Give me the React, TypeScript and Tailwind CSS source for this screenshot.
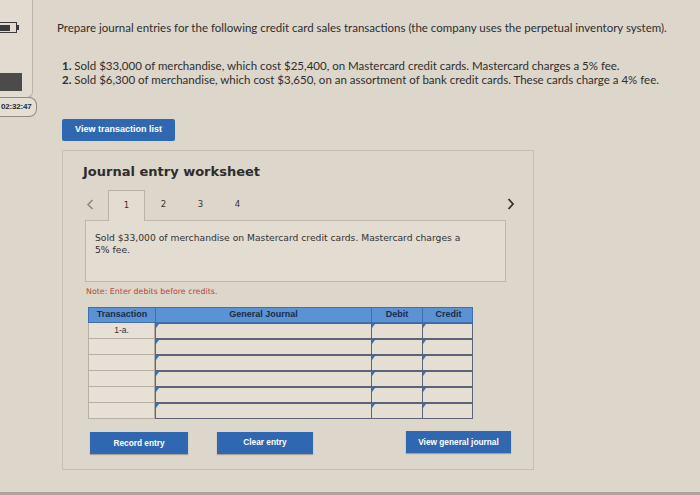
import React from "react";

const Marker = () => (
  <span className="absolute left-0 top-0 h-0 w-0 border-t-[4px] border-r-[3px] border-t-[#3f6fb5] border-r-transparent" />
);

function InputCell({ last }: { last?: boolean }) {
  return (
    <div
      className={`relative h-[16px] border-[1.5px] border-[#5b6378] bg-[#e4ded3] ${last ? "" : "-mr-[1.5px]"}`}
    >
      <Marker />
    </div>
  );
}

export default function App() {
  const rows = [0, 1, 2, 3, 4, 5];
  return (
    <div className="relative flex h-[495px] w-[700px] flex-col overflow-hidden bg-[#ddd6ca] text-[#2b2b2b]">
      <div className="flex flex-1">
        {/* left timer rail */}
        <div className="flex w-[37px] shrink-0 flex-col">
          <div className="flex h-[98px] w-[33px] flex-col rounded-br-[6px] border-r border-b border-[#b9b3a8] bg-[#e1dbd0]">
            <div className="mt-[22px] flex items-center">
              <div className="flex h-[11px] w-[17px] items-center border-[1.5px] border-l-0 border-[#3a3a3a] pr-[1px]">
                <div className="h-[6px] w-[10px] bg-[#3a3a3a]" />
              </div>
              <div className="h-[5px] w-[2px] bg-[#3a3a3a]" />
            </div>
            <div className="mt-[40px] h-[18px] w-[22px] bg-[#4b4b49]" />
          </div>
          <div className="-mt-[1px] flex h-[20px] w-[37px] items-center rounded-r-[8px] border border-l-0 border-[#8f8a82] bg-[#e4dfd5] pl-[1px] font-['Liberation_Sans',sans-serif] text-[8px] font-bold tracking-[-0.2px] text-[#2a2a2a]">
            02:32:47
          </div>
        </div>

        {/* main */}
        <div className="flex flex-col pl-[20px]">
          <div className="mt-[20px] h-[16px] whitespace-nowrap font-['Lato',sans-serif] text-[11.5px] leading-[16px] text-[#2e2e2e]">
            Prepare journal entries for the following credit card sales transactions (the company uses the perpetual inventory system).
          </div>
          <div className="mt-[23px] ml-[5px] flex flex-col whitespace-nowrap font-['Lato',sans-serif] text-[11.5px] leading-[14px] text-[#2e2e2e]">
            <div>
              <span className="font-bold">1.</span> Sold $33,000 of merchandise, which cost $25,400, on Mastercard credit cards. Mastercard charges a 5% fee.
            </div>
            <div>
              <span className="font-bold">2.</span> Sold $6,300 of merchandise, which cost $3,650, on an assortment of bank credit cards. These cards charge a 4% fee.
            </div>
          </div>

          <div className="mt-[32px] ml-[5px] flex h-[22px] w-[113px] items-center justify-center rounded-[2px] bg-[#2f67b0] font-['Liberation_Sans',sans-serif] text-[9px] font-bold text-white">
            View transaction list
          </div>

          {/* worksheet panel */}
          <div className="mt-[9px] ml-[5px] flex h-[320px] w-[472px] flex-col border border-[#c5bfb4] bg-[#ddd7cb] font-['DejaVu_Sans',sans-serif]">
            <div className="mt-[12px] ml-[20px] h-[18px] text-[13px] font-bold leading-[18px] text-[#2d2d2d]">
              Journal entry worksheet
            </div>

            {/* tabs */}
            <div className="mt-[9px] ml-[22px] flex h-[30px] w-[426px] items-stretch">
              <div className="flex w-[23px] items-center pl-[1px] pb-[2px]">
                <svg width="8" height="11" viewBox="0 0 8 11">
                  <path d="M6.5 1 L2 5.5 L6.5 10" fill="none" stroke="#8a8a8a" strokeWidth="1.6" />
                </svg>
              </div>
              <div className="relative z-10 -mb-px flex w-[37px] items-center justify-center border border-b-0 border-[#b9b2a6] bg-[#e2dcd1] pb-[2px] text-[8.5px] text-[#333]">
                1
              </div>
              <div className="flex w-[37px] items-center justify-center pb-[2px] text-[8.5px] text-[#333]">2</div>
              <div className="flex w-[37px] items-center justify-center pb-[2px] text-[8.5px] text-[#333]">3</div>
              <div className="flex w-[37px] items-center justify-center pb-[2px] text-[8.5px] text-[#333]">4</div>
              <div className="flex flex-1 items-end justify-end pb-[10px] pr-0">
                <svg width="8" height="12" viewBox="0 0 8 12" className="-mr-[4px]">
                  <path d="M1.5 1 L6 6 L1.5 11" fill="none" stroke="#333" strokeWidth="1.8" />
                </svg>
              </div>
            </div>
            <div className="ml-[22px] h-[62px] w-[421px] whitespace-nowrap border border-[#bdb6aa] bg-[#e2dcd1] px-[9px] pt-[11px] text-[9.2px] leading-[12px] text-[#333]">
              Sold $33,000 of merchandise on Mastercard credit cards. Mastercard charges a
              <br />
              5% fee.
            </div>

            <div className="mt-[5px] ml-[23px] h-[10px] whitespace-nowrap text-[7.9px] leading-[10px] text-[#b4493d]">
              Note: Enter debits before credits.
            </div>

            {/* table */}
            <div className="mt-[10px] ml-[25px] w-[385px]">
              <div className="grid h-[16px] grid-cols-[67px_216px_51px_51px] border border-[#3f70ad] bg-[#5a92d3] font-['Liberation_Sans',sans-serif] text-[9px] font-bold text-[#1d2b45]">
                <div className="flex items-center justify-center border-r border-[#3f70ad]">Transaction</div>
                <div className="flex items-center justify-center border-r border-[#3f70ad]">General Journal</div>
                <div className="flex items-center justify-center border-r border-[#3f70ad]">Debit</div>
                <div className="flex items-center justify-center">Credit</div>
              </div>
              {rows.map((r) => (
                <div key={r} className="grid grid-cols-[67px_216px_51px_51px]">
                  <div className="flex h-[16px] items-center justify-center border border-t-0 border-[#b5afa4] bg-[#e6e0d6] font-['Liberation_Sans',sans-serif] text-[8.5px] text-[#333]">
                    {r === 0 ? "1-a." : ""}
                  </div>
                  <InputCell />
                  <InputCell />
                  <InputCell last />
                </div>
              ))}
            </div>

            {/* buttons */}
            <div className="mt-[13px] ml-[27px] flex h-[22px] w-[421px] items-center font-['Liberation_Sans',sans-serif] text-[8.3px] font-bold text-white">
              <div className="flex h-[22px] w-[98px] items-center justify-center bg-[#2f67b1] shadow-[0_1px_1px_rgba(0,0,0,0.25)]">
                Record entry
              </div>
              <div className="ml-[29px] -mt-[1px] flex h-[22px] w-[96px] items-center justify-center bg-[#2f67b1] shadow-[0_1px_1px_rgba(0,0,0,0.25)]">
                Clear entry
              </div>
              <div className="ml-auto -mt-[2px] flex h-[22px] w-[105px] items-center justify-center bg-[#2f67b1] shadow-[0_1px_1px_rgba(0,0,0,0.25)]">
                View general journal
              </div>
            </div>
          </div>
        </div>
      </div>
      <div className="h-[3px] w-full bg-[#a9a59d]" />
    </div>
  );
}
